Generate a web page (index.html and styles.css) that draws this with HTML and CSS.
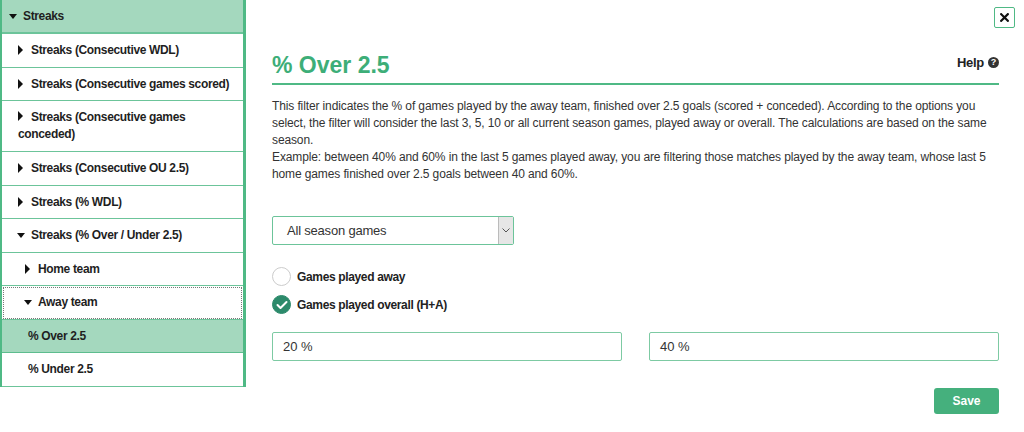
FILE: index.html
```html
<!DOCTYPE html>
<html>
<head>
<meta charset="utf-8">
<link rel="stylesheet" href="styles.css">
</head>
<body>
<div class="page">
  <nav class="side">
    <div class="row head"><span class="tri-down"></span>Streaks</div>
    <div class="row l1"><span class="tri-right"></span>Streaks (Consecutive WDL)</div>
    <div class="row l1"><span class="tri-right"></span>Streaks (Consecutive games scored)</div>
    <div class="row l1 wrap"><span class="tri-right"></span>Streaks (Consecutive games conceded)</div>
    <div class="row l1"><span class="tri-right"></span>Streaks (Consecutive OU 2.5)</div>
    <div class="row l1"><span class="tri-right"></span>Streaks (% WDL)</div>
    <div class="row l1"><span class="tri-down"></span>Streaks (% Over / Under 2.5)</div>
    <div class="row l2"><span class="tri-right"></span>Home team</div>
    <div class="row l2 focus"><span class="tri-down"></span>Away team</div>
    <div class="row l3 active">% Over 2.5</div>
    <div class="row l3">% Under 2.5</div>
  </nav>
  <main class="main">
    <div class="topbar"><button class="close"><svg width="9" height="9" viewBox="0 0 9 9"><path d="M1.2 1.2 L7.8 7.8 M7.8 1.2 L1.2 7.8" stroke="#111" stroke-width="2.2" stroke-linecap="square"/></svg></button></div>
    <div class="titlebar">
      <h1 class="title">% Over 2.5</h1>
      <div class="help">Help <span class="qicon">?</span></div>
    </div>
    <p class="desc">This filter indicates the % of games played by the away team, finished over 2.5 goals (scored + conceded). According to the options you select, the filter will consider the last 3, 5, 10 or all current season games, played away or overall. The calculations are based on the same season.<br>Example: between 40% and 60% in the last 5 games played away, you are filtering those matches played by the away team, whose last 5 home games finished over 2.5 goals between 40 and 60%.</p>
    <div class="select">
      <span class="select-text">All season games</span>
      <span class="select-btn"><svg width="8" height="5" viewBox="0 0 8 5"><path d="M0.5 0.5 L4 4 L7.5 0.5" fill="none" stroke="#555" stroke-width="1"/></svg></span>
    </div>
    <div class="radios">
      <label class="radio"><span class="circle"></span>Games played away</label>
      <label class="radio"><span class="circle on"><svg width="12" height="10" viewBox="0 0 12 10"><path d="M1.5 5 L4.5 8 L10.5 2" fill="none" stroke="#fff" stroke-width="2" stroke-linecap="round" stroke-linejoin="round"/></svg></span>Games played overall (H+A)</label>
    </div>
    <div class="inputs">
      <div class="input">20 %</div>
      <div class="input">40 %</div>
    </div>
    <div class="actions"><button class="save">Save</button></div>
  </main>
</div>
</body>
</html>
```
FILE: styles.css
```css
* { box-sizing: border-box; }
html, body { margin: 0; padding: 0; background: #fff; }
body { font-family: "Liberation Sans", Arial, sans-serif; color: #222; }
.page { display: flex; align-items: flex-start; width: 1024px; height: 432px; }

.side {
  width: 246px;
  border-left: 2px solid #4fb985;
  border-right: 3px solid #4fb985;
  border-top: 1px solid #4fb985;
  flex: none;
}
.row {
  display: flex;
  align-items: center;
  font-size: 12px;
  font-weight: bold;
  letter-spacing: -0.35px;
  line-height: 16.5px;
  padding: 8px 8px 8px 16px;
  border-bottom: 1px solid #6cc49a;
  color: #1f1f1f;
}
.row.head { background: #a4d8be; padding-left: 7px; height: 34px; border-bottom: 2px solid #6cc49a; margin-top: -1px; }
.row.l1 { padding-left: 16px; }
.row.l2 { padding-left: 23px; }
.row.l3 { padding-left: 26px; }
.row.wrap { display: block; padding-left: 16px; line-height: 17px; }
.row.wrap .tri-right { display: inline-block; vertical-align: 0px; }
.row.active { background: #a4d8be; border-bottom-color: #5dbd8e; }
.row.focus { outline: 1px dotted #777; outline-offset: -2px; }
.tri-right {
  flex: none;
  width: 0; height: 0;
  border-top: 5px solid transparent;
  border-bottom: 5px solid transparent;
  border-left: 5px solid #111;
  margin-right: 8px;
}
.tri-down {
  flex: none;
  width: 0; height: 0;
  border-left: 4.5px solid transparent;
  border-right: 4.5px solid transparent;
  border-top: 5px solid #111;
  margin-right: 6px;
}
.row.l1 .tri-down { margin-left: -1px; }
.row.l2 .tri-down { margin-left: -1px; }

.main { flex: 1; padding: 0 25px 0 26px; }
.topbar { display: flex; justify-content: flex-end; padding-top: 7px; margin-right: -16px; height: 37px; }
.close {
  width: 21px; height: 21px; padding: 0;
  border: 1px solid #4fb985; border-radius: 2px; background: #fff;
  display: flex; align-items: center; justify-content: center;
}
.titlebar {
  display: flex; justify-content: space-between; align-items: flex-end;
  border-bottom: 2px solid #4fb985;
  height: 48px;
  padding-bottom: 4px;
}
.title { margin: 0; font-size: 23px; font-weight: bold; color: #3dae78; line-height: 28px; }
.help { font-size: 13px; font-weight: bold; color: #222; display: flex; align-items: center; gap: 4px; margin-bottom: 9px; letter-spacing: -0.3px; }
.qicon {
  width: 11px; height: 11px; border-radius: 50%; background: #333; color: #fff;
  font-size: 9px; line-height: 11px; text-align: center; display: inline-block; letter-spacing: 0;
}
.desc { margin: 13px 0 0; font-size: 12px; line-height: 17px; color: #333; letter-spacing: -0.12px; }

.select {
  margin-top: 33px;
  width: 242px; height: 29px;
  border: 1px solid #6cc49a; border-radius: 2px;
  display: flex; align-items: stretch;
}
.select-text { flex: 1; font-size: 13px; color: #333; padding-left: 14px; display: flex; align-items: center; letter-spacing: -0.2px; }
.select-btn { width: 15px; background: #e6e6e6; border-left: 1px solid #bbb; display: flex; align-items: center; justify-content: center; }

.radios { margin-top: 22px; display: flex; flex-direction: column; gap: 9px; }
.radio { display: flex; align-items: center; gap: 6px; font-size: 12px; font-weight: bold; color: #222; letter-spacing: -0.35px; }
.circle { width: 19px; height: 19px; border-radius: 50%; border: 1px solid #ccc; display: flex; align-items: center; justify-content: center; }
.circle.on { background: #2c8a6b; border-color: #2c8a6b; }

.inputs { margin-top: 18px; display: flex; gap: 27px; }
.input {
  flex: 1; height: 29px; border: 1px solid #7dcaa3; border-radius: 2px;
  font-size: 13px; color: #333; padding-left: 10px; display: flex; align-items: center;
}
.actions { display: flex; justify-content: flex-end; margin-top: 27px; }
.save {
  width: 65px; height: 26px; border: 0; border-radius: 3px; background: #45b07d;
  color: #fff; font-weight: bold; font-size: 12px; font-family: inherit;
}
```
